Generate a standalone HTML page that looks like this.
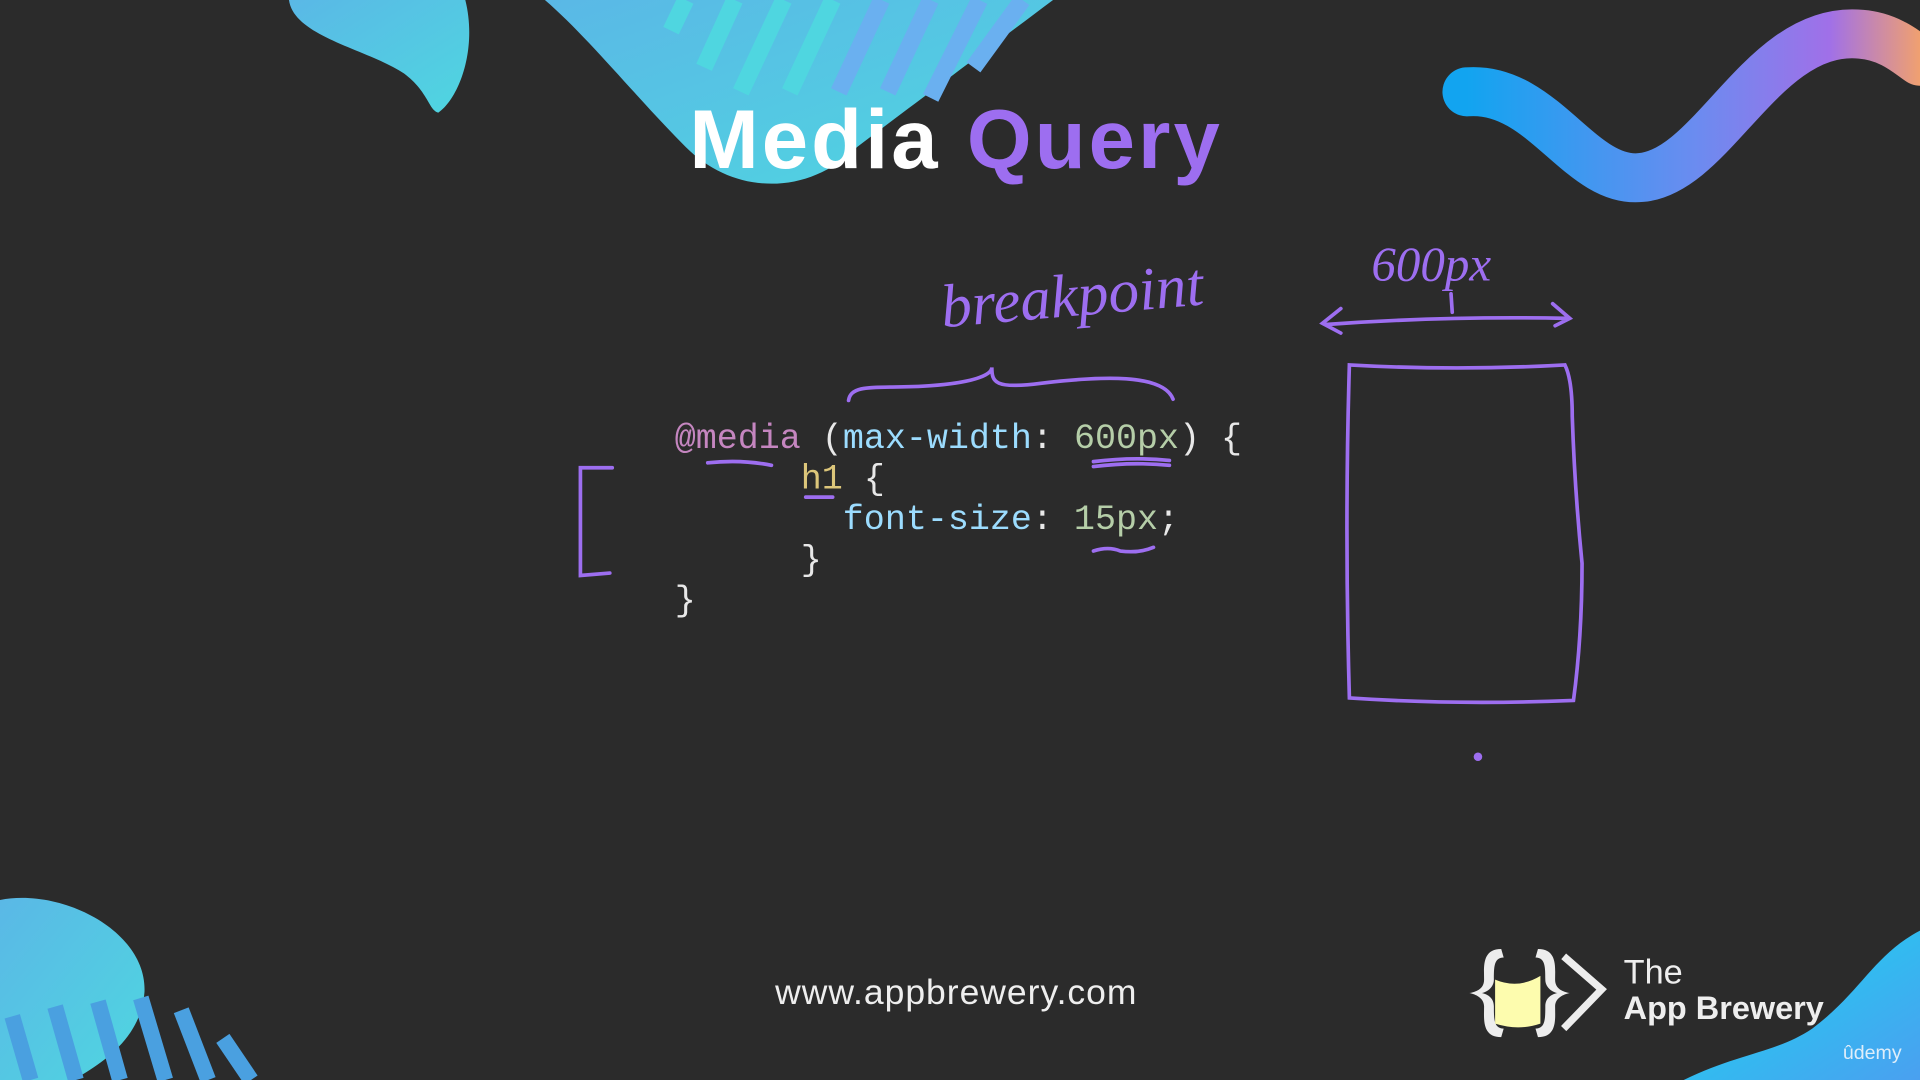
<!DOCTYPE html>
<html><head><meta charset="utf-8"><style>
html,body{margin:0;padding:0;background:#2b2b2b;overflow:hidden;width:1920px;height:1080px}
#w{position:absolute;left:0;top:0;width:1568px;height:882px;transform:scale(1.22449);transform-origin:0 0;background:#2b2b2b}
.t{position:absolute;white-space:pre}
.code{font-family:"Liberation Mono",monospace;font-size:28.6px;color:#e8e8e8;line-height:33px}
</style></head><body><div id="w">
<svg width="1568" height="882" style="position:absolute;left:0;top:0">
<defs>
<linearGradient id="g1" x1="0" y1="0" x2="1" y2="1"><stop offset="0" stop-color="#5ab8e6"/><stop offset="1" stop-color="#4fd6e0"/></linearGradient>
<linearGradient id="g2" x1="0" y1="0" x2="1" y2="0"><stop offset="0" stop-color="#12a4f0"/><stop offset="0.5" stop-color="#6a8cf0"/><stop offset="0.8" stop-color="#a070e8"/><stop offset="1" stop-color="#f0a070"/></linearGradient>
<linearGradient id="g3" x1="0" y1="0" x2="1" y2="1"><stop offset="0" stop-color="#1ad6f0"/><stop offset="1" stop-color="#4aa0f0"/></linearGradient>
</defs>
<path d="M236 0 C240 30 300 40 330 60 C350 75 350 90 358 92 C375 80 390 40 380 0Z" fill="url(#g1)"/>
<path d="M445 0 C480 30 520 80 560 120 C600 160 660 160 700 120 C740 90 780 60 860 0Z" fill="url(#g1)"/>
<g stroke="#4fd6e0" stroke-width="14"><line x1="560" y1="0" x2="548" y2="25"/><line x1="600" y1="0" x2="575" y2="55"/><line x1="640" y1="0" x2="605" y2="75"/><line x1="680" y1="0" x2="645" y2="75"/></g>
<g stroke="#6ab0f0" stroke-width="14"><line x1="720" y1="0" x2="685" y2="75"/><line x1="760" y1="0" x2="725" y2="75"/><line x1="800" y1="0" x2="760" y2="80"/><line x1="835" y1="0" x2="795" y2="55"/></g>
<path d="M1198 75 C1260 70 1290 150 1340 145 C1400 140 1440 20 1520 28 C1545 30 1560 45 1568 50" fill="none" stroke="url(#g2)" stroke-width="40" stroke-linecap="round"/>
<path d="M0 735 C50 725 120 760 118 810 C115 850 80 870 60 882 L0 882Z" fill="url(#g1)"/>
<g stroke="#4aa0e0" stroke-width="13"><line x1="10" y1="830" x2="25" y2="882"/><line x1="45" y1="822" x2="62" y2="882"/><line x1="80" y1="818" x2="98" y2="882"/><line x1="115" y1="815" x2="135" y2="882"/><line x1="148" y1="825" x2="170" y2="882"/><line x1="182" y1="848" x2="205" y2="882"/></g>
<path d="M1375 882 C1420 860 1450 860 1480 840 C1520 810 1530 780 1568 760 L1568 882Z" fill="url(#g3)"/>
<g fill="none" stroke="#9d6ef0" stroke-width="3" stroke-linecap="round">
<path d="M693 327 C695 312 720 318 760 315 C800 312 810 305 810 300 C810 312 812 318 850 313 C900 307 950 305 958 326"/>
<path d="M578 378 Q605 375 630 380"/>
<path d="M893 381 Q925 377 955 380 M893 377 Q925 373 955 376"/>
<path d="M658 406 L680 406"/>
<path d="M893 450 Q905 446 915 450 Q930 452 942 447"/>
<path d="M500 382 L474 382 L474 470 L498 468"/>
<path d="M1083 265 Q1180 258 1280 260 M1095 252 L1080 264 L1095 272 M1268 248 L1282 260 L1270 266"/>
<path d="M1102 298 Q1190 303 1278 298 Q1284 310 1284 340 Q1286 400 1292 460 Q1292 520 1285 572 Q1190 576 1102 570 Q1098 430 1102 298Z"/>
<path d="M1185 240 L1186 255"/>
</g>
<circle cx="1207" cy="618" r="3.5" fill="#9d6ef0"/>
<g fill="#ededed"><path d="M1226 775 C1210 775 1212 790 1212 800 C1212 808 1205 810 1200 811 C1205 812 1212 815 1212 822 C1212 832 1210 847 1226 847 L1228 840 C1220 840 1220 832 1220 822 C1220 815 1215 812 1210 811 C1215 810 1220 806 1220 800 C1220 790 1220 782 1228 782Z"/>
<path d="M1256 775 C1272 775 1270 790 1270 800 C1270 808 1277 810 1282 811 C1277 812 1270 815 1270 822 C1270 832 1272 847 1256 847 L1254 840 C1262 840 1262 832 1262 822 C1262 815 1267 812 1272 811 C1267 810 1262 806 1262 800 C1262 790 1262 782 1254 782Z"/></g>
<path d="M1277 781 L1308 808 L1277 840" fill="none" stroke="#ededed" stroke-width="6"/>
<path d="M1221 800 Q1240 808 1258 797 L1258 836 Q1240 842 1221 836Z" fill="#fdfcae"/>
</svg>
<div class="t" style="left:563px;top:75px;font:bold 68px 'Liberation Sans',sans-serif;color:#fff;letter-spacing:2.5px">Media <span style="color:#9d6ef0">Query</span></div>
<div class="t" style="left:768px;top:212px;font:italic 50px 'Liberation Serif',serif;color:#9d6ef0;transform:rotate(-5deg)">breakpoint</div>
<div class="t" style="left:1120px;top:192px;font:italic 40px 'Liberation Serif',serif;color:#9d6ef0">600px</div>
<div class="t code" style="left:551px;top:342px"><span style="color:#c586c0">@media</span> (<span style="color:#9cdcfe">max-width</span>: <span style="color:#b5cea8">600px</span>) {
      <span style="color:#dcc67a">h1</span> {
        <span style="color:#9cdcfe">font-size</span>: <span style="color:#b5cea8">15px</span>;
      }
}</div>
<div class="t" style="left:633px;top:795px;font:29px 'Liberation Sans',sans-serif;color:#eee;letter-spacing:0.8px">www.appbrewery.com</div>
<div class="t" style="left:1326px;top:778px;font:28px 'Liberation Sans',sans-serif;color:#eee">The</div>
<div class="t" style="left:1326px;top:808px;font:bold 26.5px 'Liberation Sans',sans-serif;color:#eee">App Brewery</div>
<div class="t" style="left:1505px;top:852px;font:16px 'Liberation Sans',sans-serif;color:#dfeefa">ûdemy</div>
</div></body></html>
